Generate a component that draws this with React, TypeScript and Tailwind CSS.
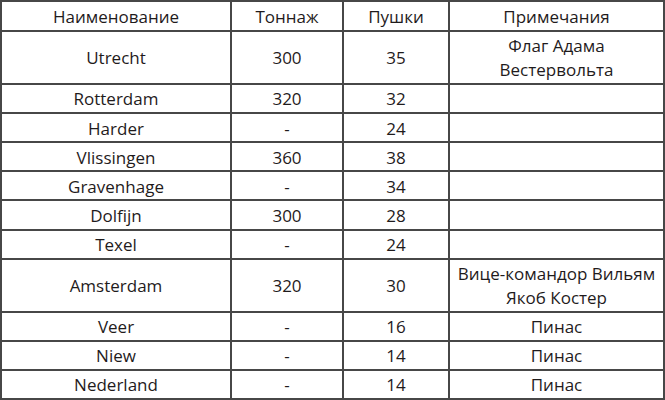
import React from "react";

type Row = { name: string; t: string; g: string; note: string[] };

const rows: Row[] = [
  { name: "Utrecht", t: "300", g: "35", note: ["Флаг Адама", "Вестервольта"] },
  { name: "Rotterdam", t: "320", g: "32", note: [] },
  { name: "Harder", t: "-", g: "24", note: [] },
  { name: "Vlissingen", t: "360", g: "38", note: [] },
  { name: "Gravenhage", t: "-", g: "34", note: [] },
  { name: "Dolfijn", t: "300", g: "28", note: [] },
  { name: "Texel", t: "-", g: "24", note: [] },
  { name: "Amsterdam", t: "320", g: "30", note: ["Вице-командор Вильям", "Якоб Костер"] },
  { name: "Veer", t: "-", g: "16", note: ["Пинас"] },
  { name: "Niew", t: "-", g: "14", note: ["Пинас"] },
  { name: "Nederland", t: "-", g: "14", note: ["Пинас"] },
];

function Cell({ children }: { children?: React.ReactNode }) {
  return (
    <div className="bg-white flex flex-col items-center justify-center text-center leading-[24px] pt-[2px]">
      {children}
    </div>
  );
}

export default function App() {
  return (
    <div
      className="w-[665px] h-[400px] bg-[#474747] p-[2px] grid gap-[2px] grid-cols-[228px_110px_104px_213px] grid-rows-[1.03fr_1.875fr_1fr_1fr_1fr_1fr_1fr_1fr_1.875fr_1fr_1fr_1fr] text-[17px] text-[#1f1b1c]"
      style={{ fontFamily: '"Open Sans", "Noto Sans", sans-serif' }}
    >
      <Cell>Наименование</Cell>
      <Cell>Тоннаж</Cell>
      <Cell>Пушки</Cell>
      <Cell>Примечания</Cell>
      {rows.map((r) => (
        <React.Fragment key={r.name}>
          <Cell>{r.name}</Cell>
          <Cell>{r.t}</Cell>
          <Cell>{r.g}</Cell>
          <Cell>
            {r.note.map((n) => (
              <span key={n}>{n}</span>
            ))}
          </Cell>
        </React.Fragment>
      ))}
    </div>
  );
}
